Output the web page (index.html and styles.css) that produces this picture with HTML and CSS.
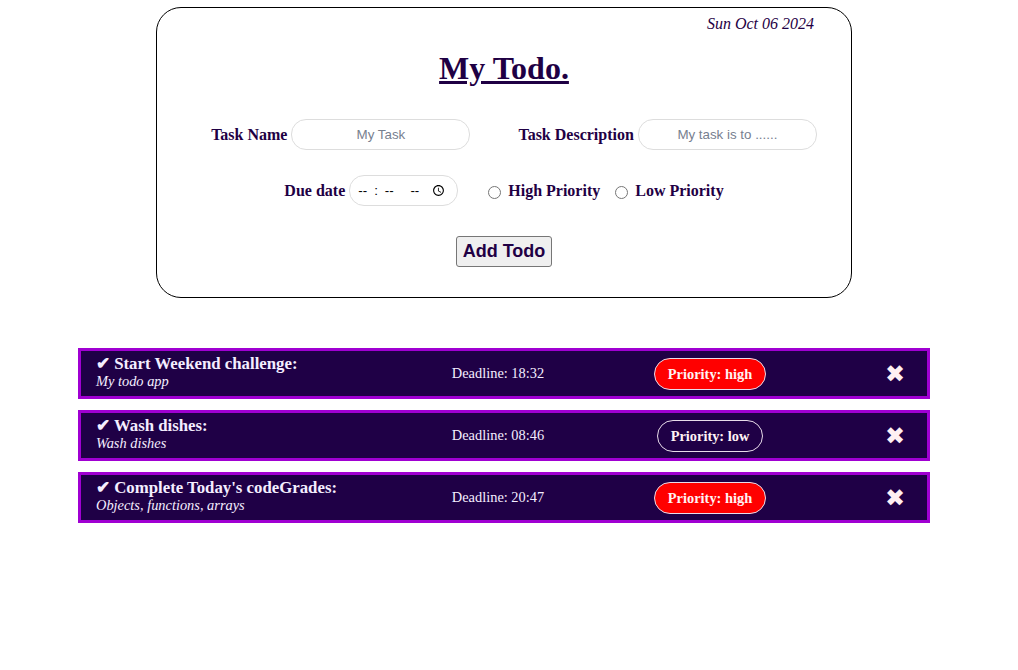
FILE: index.html
```html
<!DOCTYPE html>
<html lang="en">
<head>
<meta charset="utf-8">
<title>My Todo</title>
<link rel="stylesheet" href="styles.css">
</head>
<body>
<div class="page">
  <form class="card">
    <div class="date">Sun Oct 06 2024</div>
    <h1 class="title">My Todo.</h1>
    <div class="row row-one">
      <div class="field">
        <label class="lbl" for="name">Task Name</label>
        <input class="txt" id="name" type="text" placeholder="My Task">
      </div>
      <div class="field">
        <label class="lbl" for="desc">Task Description</label>
        <input class="txt" id="desc" type="text" placeholder="My task is to ......">
      </div>
    </div>
    <div class="row row-two">
      <div class="field">
        <label class="lbl" for="due">Due date</label>
        <input class="time" id="due" type="time">
      </div>
      <div class="radios">
        <input class="radio" type="radio" name="prio" id="high">
        <label class="lbl" for="high">High Priority</label>
        <input class="radio radio-second" type="radio" name="prio" id="low">
        <label class="lbl" for="low">Low Priority</label>
      </div>
    </div>
    <div class="row row-btn">
      <button class="add" type="button">Add Todo</button>
    </div>
  </form>

  <ul class="todos">
    <li class="todo">
      <div class="info">
        <div class="t-title">✔ Start Weekend challenge:</div>
        <div class="t-desc">My todo app</div>
      </div>
      <div class="deadline">Deadline: 18:32</div>
      <div class="prio-cell"><span class="pill pill-high">Priority: high</span></div>
      <div class="del">✖</div>
    </li>
    <li class="todo">
      <div class="info">
        <div class="t-title">✔ Wash dishes:</div>
        <div class="t-desc">Wash dishes</div>
      </div>
      <div class="deadline">Deadline: 08:46</div>
      <div class="prio-cell"><span class="pill pill-low">Priority: low</span></div>
      <div class="del">✖</div>
    </li>
    <li class="todo">
      <div class="info">
        <div class="t-title">✔ Complete Today's codeGrades:</div>
        <div class="t-desc">Objects, functions, arrays</div>
      </div>
      <div class="deadline">Deadline: 20:47</div>
      <div class="prio-cell"><span class="pill pill-high">Priority: high</span></div>
      <div class="del">✖</div>
    </li>
  </ul>
</div>
</body>
</html>
```

FILE: styles.css
```css
html, body {
  margin: 0;
  padding: 0;
  background: #ffffff;
}

body {
  font-family: "Liberation Serif", "Times New Roman", serif;
  font-size: 16px;
  color: #1f0044;
}

.page {
  padding: 7px 10px 0 0;
}

.card {
  box-sizing: border-box;
  width: 696px;
  margin: 0 auto;
  border: 1px solid #000000;
  border-radius: 25px;
  padding: 6px 0 30px;
}

.date {
  text-align: right;
  padding-right: 37px;
  font-style: italic;
  line-height: 18px;
  margin-top: 1px;
}

.title {
  margin: 17px 0 0;
  text-align: center;
  font-size: 32px;
  font-weight: bold;
  text-decoration: underline;
  line-height: 36px;
}

.row {
  display: flex;
  justify-content: center;
  align-items: center;
}

.row-one {
  margin-top: 33px;
  padding-left: 20px;
  gap: 48px;
}

.row-two {
  margin-top: 25px;
  gap: 25px;
}

.row-btn {
  margin-top: 30px;
}

.field {
  display: flex;
  align-items: center;
  gap: 4px;
}

.lbl {
  font-weight: bold;
  font-size: 16px;
  color: #1f0044;
}

.txt {
  box-sizing: border-box;
  width: 179px;
  height: 31px;
  border: 1px solid #dddddd;
  border-radius: 15px;
  padding: 0 8px;
  text-align: center;
  font-family: "Liberation Sans", Arial, sans-serif;
  font-size: 13.33px;
  color: #333333;
  background: #ffffff;
  outline: none;
}

.txt::placeholder {
  color: #77808f;
}

.time {
  box-sizing: border-box;
  width: 109px;
  height: 31px;
  border: 1px solid #dddddd;
  border-radius: 15px;
  padding: 0 8px 0 7px;
  font-family: "Liberation Sans", Arial, sans-serif;
  font-size: 13.33px;
  color: #000000;
  background: #ffffff;
}

.time::-webkit-datetime-edit-text {
  padding: 0 6px;
}

.radios {
  display: flex;
  align-items: center;
}

.radio {
  width: 13px;
  height: 13px;
  margin: 3px 7px 0 5px;
}

.radio-second {
  margin-left: 15px;
}

.add {
  font-family: "Liberation Sans", Arial, sans-serif;
  font-size: 18px;
  font-weight: bold;
  color: #1f0044;
  background: #efefef;
  border: 1px solid #767676;
  border-radius: 3px;
  padding: 4px 6px;
  line-height: 21px;
}

.todos {
  list-style: none;
  margin: 50px auto 0;
  padding: 0;
  width: 852px;
  display: flex;
  flex-direction: column;
  gap: 11px;
}

.todo {
  box-sizing: border-box;
  height: 51px;
  background: #1f0046;
  border: 3px solid #a000d2;
  color: #f4eeff;
  display: grid;
  grid-template-columns: 302px 200px 224px 1fr;
  align-items: center;
  padding: 0 22px 0 15px;
  font-size: 14.4px;
}

.info {
  align-self: start;
  padding-top: 3px;
}

.t-title {
  font-weight: bold;
  font-size: 16.8px;
  line-height: 19px;
  white-space: nowrap;
}

.t-desc {
  font-style: italic;
  font-size: 14.4px;
  line-height: 16px;
  white-space: nowrap;
}

.deadline {
  justify-self: center;
}

.prio-cell {
  justify-self: center;
}

.pill {
  display: inline-block;
  font-weight: bold;
  padding: 7px 13px;
  border-radius: 16px;
  border: 1px solid #e8dcea;
  line-height: 16px;
  color: #fff2f4;
}

.pill-high {
  background: #ff0000;
}

.pill-low {
  background: transparent;
}

.del {
  justify-self: end;
  font-family: "DejaVu Sans", sans-serif;
  font-size: 24px;
  color: #fff0f2;
  line-height: 24px;
}
```
